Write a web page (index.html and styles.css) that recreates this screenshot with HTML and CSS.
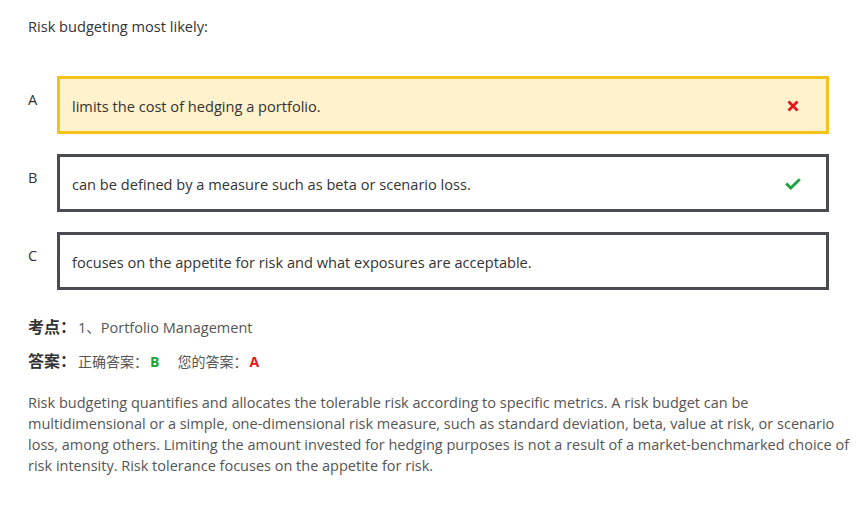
FILE: index.html
```html
<!DOCTYPE html>
<html lang="zh-CN">
<head>
    <meta charset="UTF-8">
    <meta name="viewport" content="width=device-width, initial-scale=1.0">
    <title>Risk budgeting</title>
    <link rel="stylesheet" href="styles.css">
</head>
<body>

<div class="question">
    <p class="stem">Risk budgeting most likely:</p>

    <!-- Pilihan jawaban -->
    <div class="options">
        <div class="option">
            <span class="letter">A</span>
            <div class="choice wrong">
                <span>limits the cost of hedging a portfolio.</span>
                <svg class="mark" width="12" height="12" viewBox="0 0 12 12">
                    <path d="M1.5 1.5 L10.5 10.5 M10.5 1.5 L1.5 10.5" stroke="#e8141b" stroke-width="2.8"/>
                </svg>
            </div>
        </div>
        <div class="option">
            <span class="letter">B</span>
            <div class="choice">
                <span>can be defined by a measure such as beta or scenario loss.</span>
                <svg class="mark check" width="16" height="12" viewBox="0 0 16 12">
                    <path d="M1.2 5.5 L5.8 10 L14.8 1.2" fill="none" stroke="#1aa33a" stroke-width="2.8"/>
                </svg>
            </div>
        </div>
        <div class="option">
            <span class="letter">C</span>
            <div class="choice">
                <span>focuses on the appetite for risk and what exposures are acceptable.</span>
            </div>
        </div>
    </div>

    <div class="meta">
        <div class="meta-row">
            <span class="meta-label">考点：</span>
            <span class="meta-text topic">1、Portfolio Management</span>
        </div>
        <div class="meta-row">
            <span class="meta-label">答案：</span>
            <span class="meta-text">正确答案：<b class="right-ans">B</b></span>
            <span class="meta-text yours">您的答案：<b class="wrong-ans">A</b></span>
        </div>
    </div>

    <p class="explain">Risk budgeting quantifies and allocates the tolerable risk according to specific metrics. A risk budget can be multidimensional or a simple, one-dimensional risk measure, such as standard deviation, beta, value at risk, or scenario loss, among others. Limiting the amount invested for hedging purposes is not a result of a market-benchmarked choice of risk intensity. Risk tolerance focuses on the appetite for risk.</p>
</div>

</body>
</html>
```

FILE: styles.css
```css
body {
    font-family: "Open Sans", "Noto Sans CJK SC", sans-serif;
    background-color: #fff;
    color: #333;
    margin: 0;
    padding: 0;
}
.question {
    padding: 14px 4px 0 28px;
}
.stem {
    margin: 0;
    font-size: 14.6px;
    line-height: 24px;
    color: #333;
}
.options {
    margin-top: 38px;
    display: flex;
    flex-direction: column;
    gap: 20px;
}
.option {
    display: flex;
    align-items: flex-start;
}
.letter {
    width: 29px;
    flex-shrink: 0;
    font-size: 14.6px;
    line-height: 20px;
    margin-top: 13px;
    color: #333;
}
.choice {
    box-sizing: border-box;
    width: 772px;
    height: 58px;
    border: 3px solid #4b4b52;
    background: #fff;
    display: flex;
    align-items: center;
    justify-content: space-between;
    padding: 1px 27px 0 12px;
    font-size: 14.6px;
    color: #333;
}
.choice.wrong {
    background: #fff2cc;
    border-color: #f5c21b;
}
.mark {
    display: block;
}
.mark.check {
    margin-right: -2px;
}
.meta {
    margin-top: 25px;
    display: flex;
    flex-direction: column;
    gap: 9px;
}
.meta-row {
    display: flex;
    align-items: baseline;
    line-height: 24px;
}
.meta-label {
    font-size: 16px;
    font-weight: bold;
    color: #333;
}
.meta-text {
    font-size: 14px;
    color: #555;
    margin-left: 2px;
}
.meta-text.topic {
    font-size: 14.5px;
}
.yours {
    margin-left: 18px;
}
.right-ans {
    color: #1aa33a;
    margin-left: 2px;
}
.wrong-ans {
    color: #e8141b;
    margin-left: 2px;
}
.explain {
    margin: 18px 0 0;
    font-size: 14.5px;
    line-height: 21px;
    color: #555;
}
```
